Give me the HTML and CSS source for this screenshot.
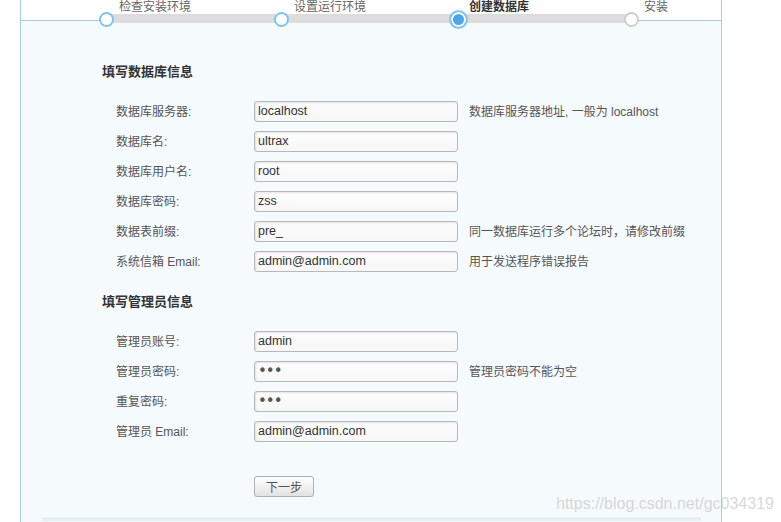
FILE: index.html
```html
<!DOCTYPE html>
<html lang="zh">
<head>
<meta charset="utf-8">
<title>安装 - 创建数据库</title>
<link rel="stylesheet" href="styles.css">
</head>
<body>
<div class="wrap">
  <div class="steps">
    <div class="track">
      <div class="step done"><span class="dot"></span><span class="step-label">检查安装环境</span></div>
      <div class="step done"><span class="dot"></span><span class="step-label">设置运行环境</span></div>
      <div class="step current"><span class="dot"></span><span class="step-label">创建数据库</span></div>
      <div class="step todo"><span class="dot"></span><span class="step-label">安装</span></div>
    </div>
  </div>
  <div class="main">
    <h3 class="section-title">填写数据库信息</h3>
    <div class="row"><label class="label">数据库服务器:</label><input class="field" type="text" value="localhost"><span class="hint">数据库服务器地址, 一般为 localhost</span></div>
    <div class="row"><label class="label">数据库名:</label><input class="field" type="text" value="ultrax"></div>
    <div class="row"><label class="label">数据库用户名:</label><input class="field" type="text" value="root"></div>
    <div class="row"><label class="label">数据库密码:</label><input class="field" type="text" value="zss"></div>
    <div class="row"><label class="label">数据表前缀:</label><input class="field" type="text" value="pre_"><span class="hint">同一数据库运行多个论坛时，请修改前缀</span></div>
    <div class="row"><label class="label">系统信箱 Email:</label><input class="field" type="text" value="admin@admin.com"><span class="hint">用于发送程序错误报告</span></div>

    <h3 class="section-title second">填写管理员信息</h3>
    <div class="row"><label class="label">管理员账号:</label><input class="field" type="text" value="admin"></div>
    <div class="row"><label class="label">管理员密码:</label><input class="field pw" type="password" value="abc"><span class="hint">管理员密码不能为空</span></div>
    <div class="row"><label class="label">重复密码:</label><input class="field pw" type="password" value="abc"></div>
    <div class="row"><label class="label">管理员 Email:</label><input class="field" type="text" value="admin@admin.com"></div>

    <div class="actions"><button class="btn" type="button">下一步</button></div>
    <div class="footer-band"></div>
  </div>
</div>
<div class="watermark">https://blog.csdn.net/gc034319</div>
</body>
</html>
```

FILE: styles.css
```css
html, body {
  margin: 0;
  padding: 0;
  background: #ffffff;
  height: 100%;
  overflow: hidden;
}
body {
  font-family: "Liberation Sans", "DejaVu Sans", "Noto Sans CJK SC", sans-serif;
  font-size: 12px;
  color: #555;
}
.wrap {
  box-sizing: border-box;
  margin-left: 20px;
  width: 702px;
  height: 100%;
  border-left: 1px solid #a8cfe0;
  border-right: 1px solid #a8cfe0;
  background: #f5fafd;
}
.steps {
  height: 20px;
  background: #ffffff;
  border-bottom: 1px solid #a8cfe0;
}
.track {
  margin-left: 85px;
  width: 525px;
  height: 9px;
  position: relative;
  top: 14px;
  background: #dcdcdc;
  display: flex;
  justify-content: space-between;
  align-items: center;
}
.step {
  width: 0;
  height: 9px;
  position: relative;
  display: flex;
  align-items: center;
}
.step.current {
  left: 2px;
}
.dot {
  flex: none;
  box-sizing: border-box;
  width: 15px;
  height: 15px;
  margin-left: -7px;
  margin-top: 2px;
  border-radius: 50%;
  border: 2px solid #7fc3ee;
  background: #ffffff;
}
.current .dot {
  width: 19px;
  height: 19px;
  margin-left: -9px;
  margin-top: 1px;
  border: 2px solid #86c7ef;
  background: #4aa8e8;
  box-shadow: inset 0 0 0 2px #ffffff;
}
.todo .dot {
  border-color: #cfcfcf;
}
.step-label {
  position: absolute;
  left: 13px;
  top: -14px;
  white-space: nowrap;
  line-height: 14px;
  color: #666;
  font-size: 12px;
}
.current .step-label {
  left: 11px;
  font-weight: bold;
  color: #333;
}
.main {
  padding-left: 81px;
  padding-top: 41px;
}
.section-title {
  margin: 0 0 14px 0;
  height: 20px;
  line-height: 20px;
  font-size: 13px;
  font-weight: bold;
  color: #333;
}
.section-title.second {
  margin-top: 16px;
}
.row {
  height: 30px;
  display: flex;
  align-items: center;
  padding-left: 14px;
}
.label {
  width: 138px;
  flex: none;
  color: #555;
  margin-top: -2px;
}
.hint {
  margin-left: 11px;
  color: #555;
  white-space: nowrap;
  margin-top: -2px;
}
.field {
  box-sizing: border-box;
  width: 204px;
  height: 21px;
  margin: 0;
  padding: 0 3px;
  border: 1px solid #b8b8b8;
  border-radius: 3px;
  background: linear-gradient(#fdfdfd, #f7f7f7);
  box-shadow: inset 1px 1px 2px rgba(0, 0, 0, 0.1);
  font-family: "Liberation Sans", "DejaVu Sans", "Noto Sans CJK SC", sans-serif;
  font-size: 12.5px;
  color: #333;
  outline: none;
}
.field.pw {
  font-family: "DejaVu Sans", sans-serif;
  font-size: 15px;
  letter-spacing: -1px;
  color: #555;
}
.actions {
  margin-top: 30px;
  padding-left: 152px;
  height: 21px;
}
.btn {
  box-sizing: border-box;
  width: 60px;
  height: 21px;
  margin: 0;
  padding: 0;
  border: 1px solid #b0b0b0;
  border-radius: 3px;
  background: linear-gradient(#ffffff, #e2e2e2);
  font-family: "Liberation Sans", "DejaVu Sans", "Noto Sans CJK SC", sans-serif;
  font-size: 12px;
  color: #555;
}
.footer-band {
  margin-top: 19px;
  margin-left: -60px;
  width: 659px;
  height: 4px;
  border-top: 1px solid #ffffff;
  background: #e5eff8;
}
.watermark {
  position: absolute;
  left: 556px;
  top: 494px;
  font-family: "Liberation Sans", Arial, sans-serif;
  font-size: 16px;
  line-height: 19px;
  color: rgba(190, 190, 190, 0.6);
  white-space: nowrap;
  pointer-events: none;
}
```
